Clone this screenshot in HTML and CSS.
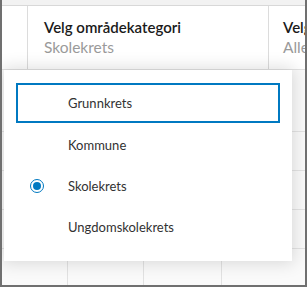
FILE: index.html
```html
<!DOCTYPE html>
<html lang="no">
<head>
<meta charset="utf-8">
<link rel="stylesheet" href="styles.css">
</head>
<body>
<div class="frame">
  <div class="topband"></div>
  <div class="head">
    <div class="hcell c0"></div>
    <div class="hcell c1">
      <div class="title">Velg områdekategori</div>
      <div class="sub">Skolekrets</div>
    </div>
    <div class="hcell c2">
      <div class="title">Velg</div>
      <div class="sub">Alle</div>
    </div>
  </div>
  <div class="rows">
    <div class="row"><div class="cell"></div><div class="cell"></div><div class="cell"></div><div class="cell"></div></div>
    <div class="row"><div class="cell"></div><div class="cell"></div><div class="cell"></div><div class="cell"></div></div>
    <div class="row"><div class="cell"></div><div class="cell"></div><div class="cell"></div><div class="cell"></div></div>
    <div class="row"><div class="cell"></div><div class="cell"></div><div class="cell"></div><div class="cell"></div></div>
    <div class="row"><div class="cell"></div><div class="cell"></div><div class="cell"></div><div class="cell"></div></div>
  </div>
  <div class="menu">
    <div class="item focused"><span class="mark"></span><span class="label">Grunnkrets</span></div>
    <div class="item"><span class="mark"></span><span class="label">Kommune</span></div>
    <div class="item"><span class="mark"><span class="radio"></span></span><span class="label">Skolekrets</span></div>
    <div class="item"><span class="mark"></span><span class="label">Ungdomskolekrets</span></div>
  </div>
</div>
</body>
</html>
```

FILE: styles.css
```css
* { box-sizing: border-box; }
html, body { margin: 0; padding: 0; }
body {
  width: 307px;
  height: 287px;
  overflow: hidden;
  background: #fff;
  font-family: Lato, "Open Sans", sans-serif;
}
.frame {
  position: relative;
  width: 307px;
  height: 287px;
  border-left: 2px solid #707070;
  border-right: 2px solid #707070;
  border-bottom: 2px solid #707070;
  background: #fafafa;
  overflow: hidden;
}
.topband {
  height: 6px;
  background: #f2f2f2;
  border-bottom: 1px solid #d8d8d8;
}
.head {
  display: grid;
  grid-template-columns: 26px 241px 1fr;
  height: 64px;
  background: #fff;
  border-bottom: 1px solid #e2e2e2;
}
.hcell {
  border-right: 1px solid #dcdcdc;
  padding: 11px 0 0 16px;
  white-space: nowrap;
  overflow: hidden;
}
.hcell.c0 { padding: 0; }
.hcell.c2 { border-right: 0; padding-left: 14px; }
.title {
  font-size: 15px;
  line-height: 20px;
  font-weight: 600;
  color: #1a1a1a;
}
.sub {
  font-size: 15.5px;
  line-height: 20px;
  color: #9a9a9a;
}
.rows {
  display: flex;
  flex-direction: column;
}
.row {
  display: grid;
  grid-template-columns: 66px 76px 78px 1fr;
  height: 39px;
  border-bottom: 1px solid #e4e4e4;
}
.row:first-child { height: 62px; }
.cell { border-right: 1px solid #e2e2e2; }
.cell:last-child { border-right: 0; }
.menu {
  position: absolute;
  left: 2px;
  top: 70px;
  width: 288px;
  height: 191px;
  background: #fff;
  padding: 13px 12px 14px 12px;
  box-shadow: 0 0 16px 2px rgba(0, 0, 0, 0.14);
  display: flex;
  flex-direction: column;
}
.item {
  height: 41px;
  display: flex;
  align-items: center;
  font-size: 13px;
  color: #323232;
}
.item.focused {
  height: 40px;
  margin-bottom: 1px;
  box-shadow: inset 0 0 0 2px #0079c1;
}
.mark {
  width: 52px;
  display: flex;
  justify-content: flex-start;
  padding-left: 14px;
}
.radio {
  width: 14px;
  height: 14px;
  border-radius: 50%;
  border: 1.5px solid #0079c1;
  display: flex;
  align-items: center;
  justify-content: center;
}
.radio::after {
  content: "";
  width: 8px;
  height: 8px;
  border-radius: 50%;
  background: #0079c1;
}
```
